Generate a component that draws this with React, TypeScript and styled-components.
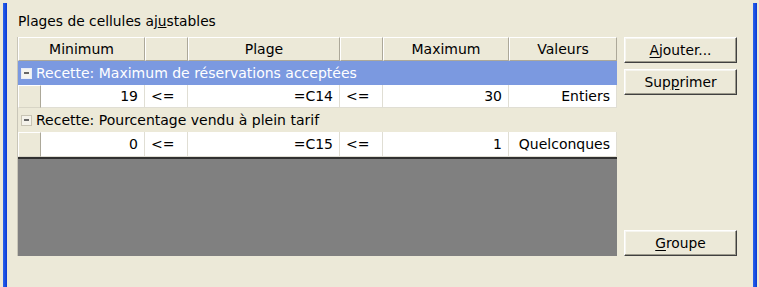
import React from 'react';
import styled, { createGlobalStyle } from 'styled-components';

const GlobalStyle = createGlobalStyle`
  html, body {
    margin: 0;
    padding: 0;
    background: #ece9d8;
  }
  body {
    font-family: 'DejaVu Sans', 'Liberation Sans', sans-serif;
    font-size: 14px;
    color: #000;
  }
`;

const Frame = styled.div`
  width: 759px;
  height: 287px;
  display: flex;
  background: #ece9d8;
  overflow: hidden;
`;

const Edge = styled.div`
  width: 4px;
  margin-top: 3px;
  background: linear-gradient(90deg, #2a63ec, #0a3ad4);
  flex-shrink: 0;
`;

const Body = styled.div`
  flex: 1;
  display: flex;
  flex-direction: column;
  padding: 11px 0 0 10px;
`;

const Caption = styled.div`
  font-size: 13.8px;
  height: 26px;
  line-height: 20px;
  padding-left: 1px;
`;

const Row = styled.div`
  display: flex;
  gap: 7px;
`;

const Grid = styled.div`
  width: 600px;
  height: 219px;
  display: flex;
  flex-direction: column;
  background: #808080;
  border-left: 1px solid #c9c6b8;
  box-sizing: border-box;
`;

const HeaderRow = styled.div`
  display: grid;
  grid-template-columns: 127px 43px 152px 43px 126px 108px;
  height: 24px;
  background: #ece9d8;
`;

const HeaderCell = styled.div`
  display: flex;
  align-items: center;
  justify-content: center;
  border-top: 1px solid #fff;
  border-left: 1px solid #fff;
  border-right: 1px solid #aca899;
  border-bottom: 1px solid #aca899;
  box-sizing: border-box;
  font-size: 14px;
`;

const GroupRow = styled.div<{ selected?: boolean }>`
  display: flex;
  align-items: center;
  height: 24px;
  gap: 4px;
  padding-left: 3px;
  background: ${p => (p.selected ? '#7b99e0' : '#ece9d8')};
  color: ${p => (p.selected ? '#fff' : '#000')};
  box-sizing: border-box;
  font-size: 14px;
`;

const Toggle = styled.span<{ selected?: boolean }>`
  width: 11px;
  height: 11px;
  box-sizing: border-box;
  border: 1px solid ${p => (p.selected ? '#e8ecf8' : '#c8c4b4')};
  background: ${p => (p.selected ? '#f4f4f0' : '#f4f2ea')};
  display: flex;
  align-items: center;
  justify-content: center;

  &::after {
    content: '';
    width: 5px;
    height: 2px;
    background: #666;
  }
`;

const DataRow = styled.div<{ last?: boolean }>`
  display: grid;
  grid-template-columns: 23px 104px 43px 152px 43px 126px 108px;
  height: ${p => (p.last ? 27 : 23)}px;
  background: #fff;
  border-bottom: ${p => (p.last ? '2px solid #303030' : 'none')};
  box-sizing: border-box;
`;

const RowHead = styled.div`
  background: #ece9d8;
  border-top: 1px solid #fff;
  border-left: 1px solid #fff;
  border-right: 1px solid #aca899;
  border-bottom: 1px solid #d8d5c6;
`;

const Cell = styled.div<{ align?: 'left' | 'right' }>`
  display: flex;
  align-items: center;
  justify-content: ${p => (p.align === 'left' ? 'flex-start' : 'flex-end')};
  padding: 0 6px;
  border-right: 1px solid #e0ded4;
  border-bottom: 1px solid #e0ded4;
  font-size: 14px;
  box-sizing: border-box;
`;

const Side = styled.div`
  width: 113px;
  height: 219px;
  display: flex;
  flex-direction: column;
`;

const Button = styled.button<{ last?: boolean }>`
  width: 113px;
  height: 26px;
  margin-bottom: ${p => (p.last ? 0 : 6)}px;
  font-family: 'DejaVu Sans', 'Liberation Sans', sans-serif;
  font-size: 13.8px;
  color: #000;
  background: #ece9d8;
  border: 1px solid;
  border-color: #fff #404040 #404040 #fff;
  box-shadow: inset -1px -1px #9c9a8c, inset 1px 1px #f6f5ef;
  padding: 0;
  cursor: default;

  u {
    text-decoration: underline;
    text-underline-offset: 2px;
  }
`;

const Spacer = styled.div`
  flex: 1;
`;

const groups = [
  {
    title: 'Recette: Maximum de réservations acceptées',
    selected: true,
    min: '19',
    cell: '=C14',
    max: '30',
    kind: 'Entiers',
  },
  {
    title: 'Recette: Pourcentage vendu à plein tarif',
    selected: false,
    min: '0',
    cell: '=C15',
    max: '1',
    kind: 'Quelconques',
  },
];

const App: React.FC = () => {
  return (
    <>
      <GlobalStyle />
      <Frame>
        <Edge style={{ marginLeft: 3 }} />
        <Body>
          <Caption>
            Plages de cellules aj<u>u</u>stables
          </Caption>
          <Row>
            <Grid>
              <HeaderRow>
                <HeaderCell>Minimum</HeaderCell>
                <HeaderCell />
                <HeaderCell>Plage</HeaderCell>
                <HeaderCell />
                <HeaderCell>Maximum</HeaderCell>
                <HeaderCell>Valeurs</HeaderCell>
              </HeaderRow>
              {groups.map((g, i) => (
                <React.Fragment key={g.title}>
                  <GroupRow selected={g.selected}>
                    <Toggle selected={g.selected} />
                    {g.title}
                  </GroupRow>
                  <DataRow last={i === groups.length - 1}>
                    <RowHead />
                    <Cell>{g.min}</Cell>
                    <Cell align="left">&lt;=</Cell>
                    <Cell>{g.cell}</Cell>
                    <Cell align="left">&lt;=</Cell>
                    <Cell>{g.max}</Cell>
                    <Cell>{g.kind}</Cell>
                  </DataRow>
                </React.Fragment>
              ))}
            </Grid>
            <Side>
              <Button>
                <u>A</u>jouter...
              </Button>
              <Button>
                Sup<u>p</u>rimer
              </Button>
              <Spacer />
              <Button last>
                <u>G</u>roupe
              </Button>
            </Side>
          </Row>
        </Body>
        <Edge style={{ marginRight: 2 }} />
      </Frame>
    </>
  );
};

export default App;
